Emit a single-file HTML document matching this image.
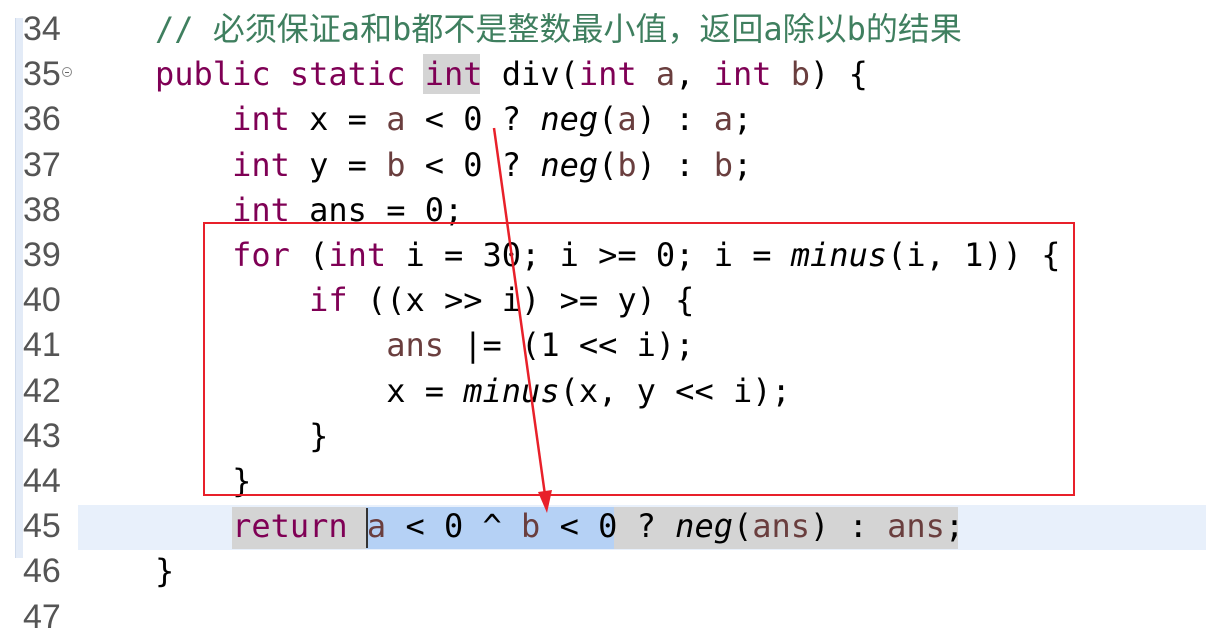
<!DOCTYPE html>
<html><head><meta charset="utf-8"><style>
body{margin:0;width:1206px;height:644px;background:#fff;overflow:hidden;position:relative;font-family:"Liberation Mono","Noto Sans CJK SC",monospace;}
.gut{position:absolute;left:15px;top:18px;width:7px;height:540px;background:#e3ebf7;border-left:1px solid #d0dbec;}
.cur{position:absolute;left:78px;top:505px;width:1128px;height:45px;background:#e8f0fb;}
.g1{position:absolute;left:232px;top:507px;width:134px;height:42px;background:#d4d4d4;}
.g2{position:absolute;left:614px;top:507px;width:344px;height:42px;background:#d4d4d4;}
.sel{position:absolute;left:366px;top:507px;width:248px;height:42px;background:#b5d1f5;}
.caret{position:absolute;left:366px;top:508px;width:2px;height:40px;background:#333;}
.hint{position:absolute;left:423px;top:54px;width:57px;height:40px;background:#d4d4d4;}
.nums{position:absolute;left:23px;top:7px;font-family:"Liberation Sans",sans-serif;font-size:34px;line-height:45.2px;color:#555;margin:0;}
pre.code{position:absolute;left:155px;top:7px;margin:0;font-size:32px;line-height:45.2px;color:#000;}
.k{color:#7f0055;}
.c{color:#3f7f5f;font-size:32px;}
.v{color:#6a3e3e;}
.m{font-style:italic;}
.fold{position:absolute;left:62px;top:67px;width:8px;height:8px;border:1px solid #888;border-radius:50%;font-size:0;}
.fold:after{content:"";position:absolute;left:2px;top:3.5px;width:4px;height:1px;background:#666;}
.box{position:absolute;left:203px;top:222px;width:868px;height:270px;border:2px solid #e8202a;}
</style></head><body>
<div class="gut"></div>
<div class="cur"></div>
<div class="hint"></div>
<div class="g1"></div><div class="g2"></div><div class="sel"></div><div class="caret"></div>
<pre class="nums">34
35
36
37
38
39
40
41
42
43
44
45
46
47</pre>
<div class="fold"></div>
<pre class="code"><span class="c">// 必须保证a和b都不是整数最小值，返回a除以b的结果</span>
<span class="k">public</span> <span class="k">static</span> <span class="k">int</span> div(<span class="k">int</span> <span class="v">a</span>, <span class="k">int</span> <span class="v">b</span>) {
    <span class="k">int</span> x = <span class="v">a</span> &lt; 0 ? <span class="m">neg</span>(<span class="v">a</span>) : <span class="v">a</span>;
    <span class="k">int</span> y = <span class="v">b</span> &lt; 0 ? <span class="m">neg</span>(<span class="v">b</span>) : <span class="v">b</span>;
    <span class="k">int</span> ans = 0;
    <span class="k">for</span> (<span class="k">int</span> i = 30; i &gt;= 0; i = <span class="m">minus</span>(i, 1)) {
        <span class="k">if</span> ((x &gt;&gt; i) &gt;= y) {
            <span class="v">ans</span> |= (1 &lt;&lt; i);
            x = <span class="m">minus</span>(x, y &lt;&lt; i);
        }
    }
    <span class="k">return</span> <span class="v">a</span> &lt; 0 ^ <span class="v">b</span> &lt; 0 ? <span class="m">neg</span>(<span class="v">ans</span>) : <span class="v">ans</span>;
}
</pre>
<div class="box"></div>
<svg style="position:absolute;left:0;top:0" width="1206" height="644">
<line x1="494" y1="128" x2="545" y2="495" stroke="#e8202a" stroke-width="2.5"/>
<polygon points="538,492 552,490 547,513" fill="#e8202a"/>
</svg>
</body></html>
